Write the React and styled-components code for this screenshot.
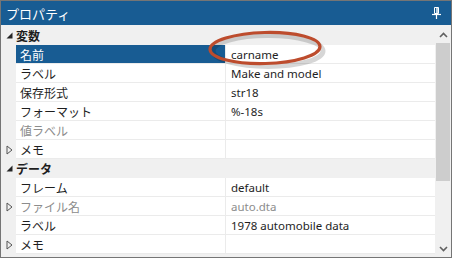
import React from "react";
import styled, { createGlobalStyle } from "styled-components";

const sections = [
  {
    title: "変数",
    rows: [
      { name: "名前", value: "carname", selected: true },
      { name: "ラベル", value: "Make and model" },
      { name: "保存形式", value: "str18" },
      { name: "フォーマット", value: "%-18s" },
      { name: "値ラベル", value: "", disabled: true },
      { name: "メモ", value: "", expandable: true },
    ],
  },
  {
    title: "データ",
    rows: [
      { name: "フレーム", value: "default" },
      { name: "ファイル名", value: "auto.dta", disabled: true, expandable: true },
      { name: "ラベル", value: "1978 automobile data" },
      { name: "メモ", value: "", expandable: true },
    ],
  },
];

const PinIcon = () => (
  <svg width="9" height="12" viewBox="0 0 9 12">
    <path d="M2.5 0.5h4v6h-4z" fill="none" stroke="#fff" strokeWidth="1" />
    <path d="M5 1v5.5" stroke="#fff" strokeWidth="1.4" />
    <path d="M0 7.5h9" stroke="#fff" strokeWidth="1.2" />
    <path d="M4.5 7.5V12" stroke="#fff" strokeWidth="1.2" />
  </svg>
);

const ExpandedArrow = () => (
  <svg width="7" height="7" viewBox="0 0 7 7">
    <path d="M6.5 0.5V6.5H0.5Z" fill="#262626" />
  </svg>
);

const CollapsedArrow = () => (
  <svg width="7" height="10" viewBox="0 0 7 10">
    <path d="M1 1L6 5L1 9Z" fill="none" stroke="#555" strokeWidth="1" />
  </svg>
);

const Chevron = ({ down }) => (
  <svg width="9" height="6" viewBox="0 0 9 6">
    <path
      d={down ? "M1 1L4.5 4.5L8 1" : "M1 5L4.5 1.5L8 5"}
      fill="none"
      stroke="#606060"
      strokeWidth="1.6"
    />
  </svg>
);

const App = () => {
  return (
    <>
      <GlobalStyle />
      <Panel>
        <TitleBar>
          <span>プロパティ</span>
          <PinIcon />
        </TitleBar>
        <Body>
          <Grid>
            {sections.map((section) => (
              <React.Fragment key={section.title}>
                <Category>
                  <Gutter>
                    <ExpandedArrow />
                  </Gutter>
                  <span>{section.title}</span>
                </Category>
                {section.rows.map((row, i) => (
                  <Row key={i}>
                    <Gutter>{row.expandable && <CollapsedArrow />}</Gutter>
                    <NameCell $selected={row.selected} $disabled={row.disabled}>
                      {row.name}
                    </NameCell>
                    <ValueCell $disabled={row.disabled}>{row.value}</ValueCell>
                  </Row>
                ))}
              </React.Fragment>
            ))}
          </Grid>
          <Scrollbar>
            <ScrollButton>
              <Chevron />
            </ScrollButton>
            <Track>
              <Thumb />
            </Track>
            <ScrollButton>
              <Chevron down />
            </ScrollButton>
          </Scrollbar>
        </Body>
        <Circle width="124" height="42" viewBox="0 0 124 42">
          <ellipse cx="61" cy="22" rx="55" ry="15.5" fill="none" stroke="rgba(0,0,0,0.16)" strokeWidth="5" />
          <ellipse cx="58" cy="19" rx="55" ry="15.5" fill="none" stroke="#bd4c2d" strokeWidth="3.2" transform="rotate(-1.5 58 19)" />
        </Circle>
      </Panel>
    </>
  );
};

export default App;

const GlobalStyle = createGlobalStyle`
  body {
    margin: 0;
    background: #fff;
  }
`;

const Panel = styled.div`
  position: relative;
  width: 452px;
  height: 258px;
  box-sizing: border-box;
  border: 1px solid #757575;
  display: flex;
  flex-direction: column;
  background: #f0f0f0;
  font-family: "Noto Sans CJK JP", "Noto Sans", sans-serif;
  overflow: hidden;
`;

const TitleBar = styled.div`
  height: 24px;
  flex-shrink: 0;
  background: #185c93;
  color: #fff;
  display: flex;
  align-items: center;
  justify-content: space-between;
  padding: 0 10px 0 5px;
  font-size: 13px;
`;

const Body = styled.div`
  flex: 1;
  display: flex;
  min-height: 0;
  padding-top: 1px;
`;

const Grid = styled.div`
  flex: 1;
  display: flex;
  flex-direction: column;
`;

const Category = styled.div`
  height: 19px;
  display: flex;
  align-items: center;
  font-size: 12px;
  font-weight: bold;
  color: #1e1e1e;
  background: #f0f0f0;
`;

const Gutter = styled.div`
  width: 15px;
  flex-shrink: 0;
  display: flex;
  align-items: center;
  justify-content: center;
  align-self: stretch;
  padding-left: 1px;
  box-sizing: border-box;
`;

const Row = styled.div`
  height: 19px;
  display: grid;
  grid-template-columns: 15px 210px 1fr;
  font-size: 12px;
`;

const Cell = styled.div`
  display: flex;
  align-items: center;
  background: #fff;
  border-bottom: 1px solid #ebebeb;
  white-space: nowrap;
  overflow: hidden;
`;

const NameCell = styled(Cell)`
  padding-left: 4px;
  border-right: 1px solid #ebebeb;
  background: ${(p) => (p.$selected ? "#185c93" : "#fff")};
  color: ${(p) => (p.$selected ? "#fff" : p.$disabled ? "#8c8c8c" : "#1e1e1e")};
`;

const ValueCell = styled(Cell)`
  padding-left: 5px;
  font-family: "Noto Sans", "Noto Sans CJK JP", sans-serif;
  font-size: 11.5px;
  color: ${(p) => (p.$disabled ? "#8c8c8c" : "#1e1e1e")};
`;

const Scrollbar = styled.div`
  width: 16px;
  display: flex;
  flex-direction: column;
  background: #f0f0f0;
`;

const ScrollButton = styled.div`
  height: 17px;
  display: flex;
  align-items: center;
  justify-content: center;
`;

const Track = styled.div`
  flex: 1;
  padding: 0 1px;
`;

const Thumb = styled.div`
  height: 138px;
  background: #cdcdcd;
`;

const Circle = styled.svg`
  position: absolute;
  left: 206px;
  top: 28px;
`;
